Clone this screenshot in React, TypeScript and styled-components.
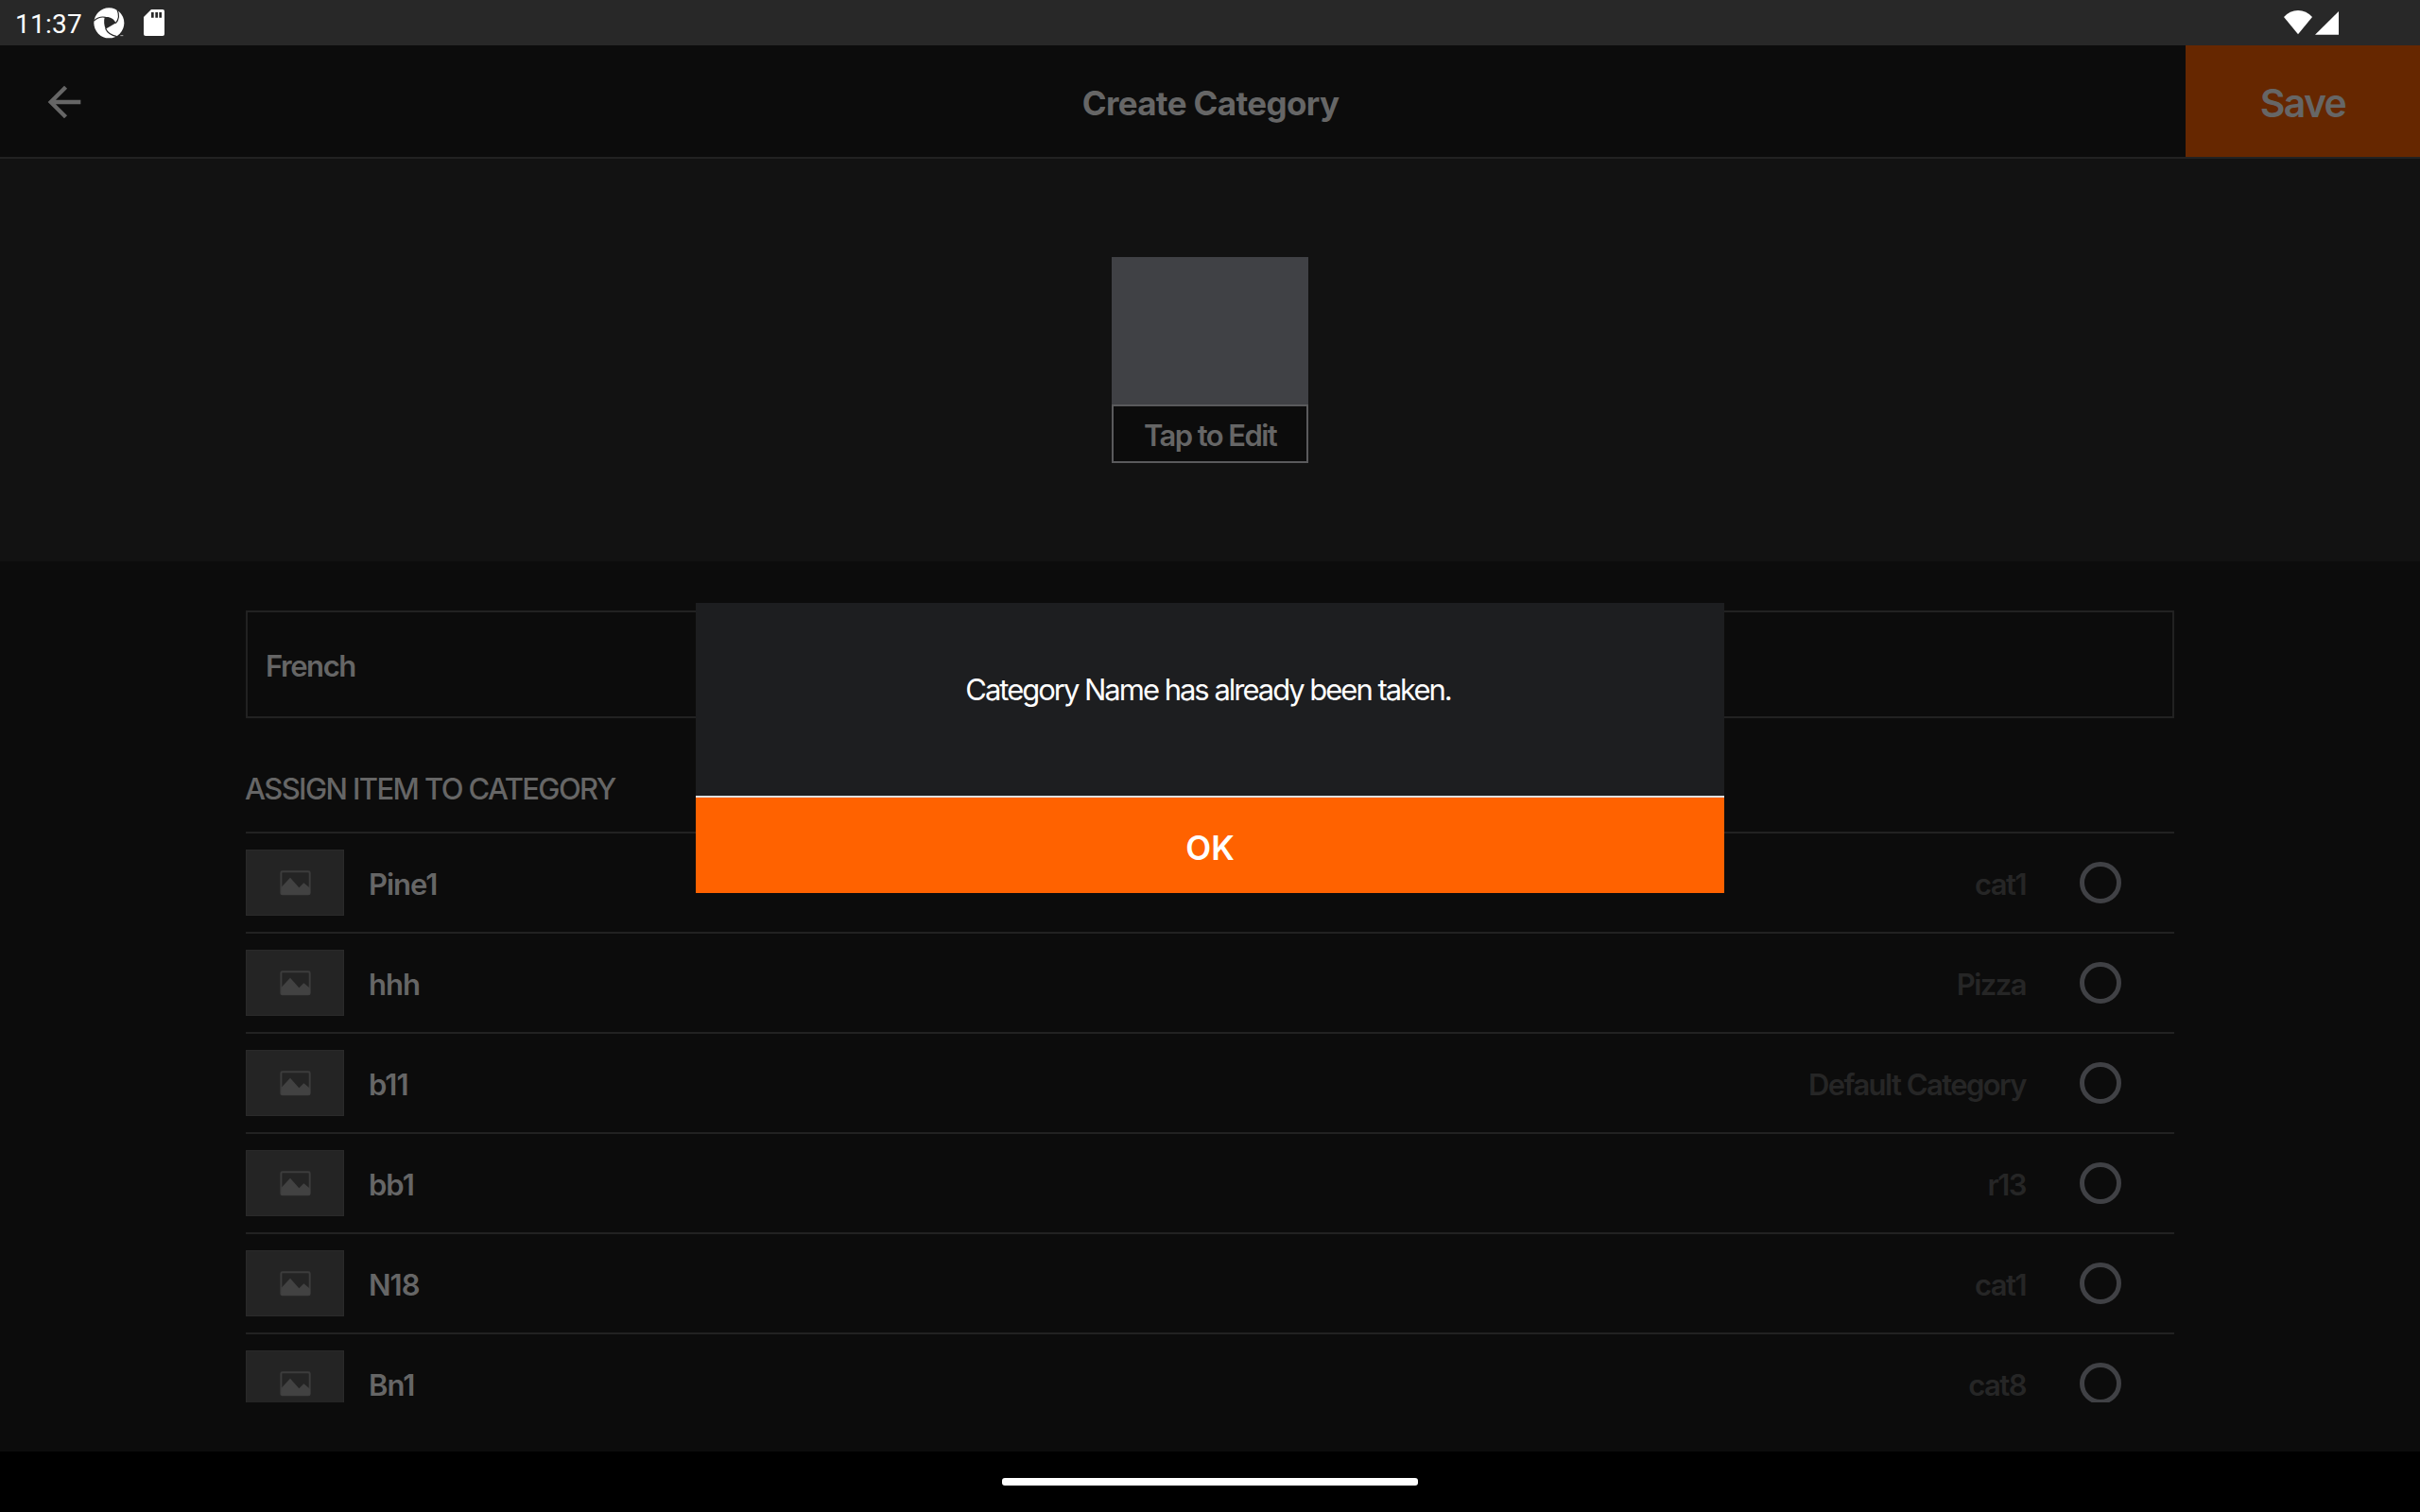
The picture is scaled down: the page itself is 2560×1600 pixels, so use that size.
import React from "react";
import styled, { createGlobalStyle } from "styled-components";

const GlobalStyle = createGlobalStyle`
  * { box-sizing: border-box; }
  body { margin: 0; background: #000; }
`;

const Screen = styled.div`
  position: relative;
  display: flex;
  flex-direction: column;
  width: 2560px;
  height: 1600px;
  overflow: hidden;
  background: #0c0c0c;
  font-family: Inter, "Liberation Sans", sans-serif;
  color: #666;
`;

const StatusBar = styled.div`
  display: flex;
  justify-content: space-between;
  height: 48px;
  flex: none;
  padding: 0 86px 0 16px;
  background: #282828;
  color: #fff;
`;

const StatusGroup = styled.div`
  display: flex;
  align-items: flex-start;
`;

const Clock = styled.span`
  width: 82px;
  padding-top: 2px;
  font: 400 28px/48px Roboto, sans-serif;
  letter-spacing: 0.25px;
  white-space: nowrap;
`;

const Glyph = styled.svg<{ $top: number; $left?: number }>`
  display: block;
  flex: none;
  margin-top: ${(p) => p.$top}px;
  margin-left: ${(p) => p.$left ?? 0}px;
`;

const Header = styled.header`
  display: grid;
  grid-template-columns: 248px 1fr 248px;
  grid-template-rows: 118px;
  height: 120px;
  flex: none;
  border-bottom: 2px solid #222;
`;

const BackButton = styled.div`
  display: flex;
  align-items: center;
  padding: 2px 0 0 42px;
`;

const Title = styled.h1`
  margin: 0;
  padding: 4px 0 0 1px;
  text-align: center;
  font-size: 35px;
  font-weight: 700;
  line-height: 114px;
  letter-spacing: -0.65px;
`;

const SaveButton = styled.div`
  padding: 4px 0 0 0;
  background: #662700;
  text-align: center;
  font-size: 41px;
  font-weight: 600;
  line-height: 114px;
  letter-spacing: -1.7px;
`;

const Hero = styled.section`
  display: flex;
  align-items: center;
  justify-content: center;
  height: 426px;
  flex: none;
  background: #121212;
`;

const ImagePicker = styled.div`
  display: flex;
  flex-direction: column;
  justify-content: flex-end;
  width: 208px;
  height: 218px;
  background: #404145;
`;

const PickerLabel = styled.div`
  height: 62px;
  padding-top: 2px;
  border: 2px solid #5a5a5c;
  background: #0c0c0c;
  text-align: center;
  font-size: 31px;
  font-weight: 600;
  line-height: 58px;
  letter-spacing: -1.6px;
  white-space: nowrap;
`;

const Form = styled.main`
  display: flex;
  flex-direction: column;
  flex: 1;
  min-height: 0;
  padding: 52px 260px;
`;

const NameField = styled.div`
  height: 114px;
  flex: none;
  padding: 3px 0 0 19px;
  border: 2px solid #222;
  font-size: 31px;
  font-weight: 600;
  line-height: 107px;
  letter-spacing: -1.45px;
`;

const SectionTitle = styled.h2`
  margin: 0 0 0 -1px;
  height: 120px;
  flex: none;
  padding-top: 30px;
  font-size: 31px;
  font-weight: 500;
  line-height: 90px;
  letter-spacing: -1.6px;
`;

const ItemList = styled.div`
  flex: 1;
  min-height: 0;
  overflow: hidden;
`;

const ItemRow = styled.div`
  display: flex;
  align-items: center;
  height: 106px;
  padding-right: 56px;
  border-top: 2px solid #222;
`;

const Thumb = styled.div`
  display: flex;
  justify-content: center;
  width: 104px;
  height: 70px;
  border: 1px solid #2a2a2a;
  background: #242424;
`;

const ItemName = styled.span`
  flex: 1;
  padding: 4px 0 0 26px;
  font-size: 31px;
  font-weight: 600;
  line-height: 60px;
  letter-spacing: -1px;
`;

const ItemCategory = styled.span`
  margin-right: 57px;
  padding-top: 4px;
  color: #262626;
  font-size: 31px;
  font-weight: 600;
  line-height: 60px;
  letter-spacing: -1.57px;
`;

const Radio = styled.span`
  width: 44px;
  height: 44px;
  border: 5px solid #404145;
  border-radius: 50%;
`;

const NavBar = styled.div`
  display: flex;
  justify-content: center;
  height: 64px;
  flex: none;
  padding-top: 28px;
  background: #000;
`;

const HomePill = styled.div`
  width: 440px;
  height: 8px;
  border-radius: 3px;
  background: #fff;
`;

const Dialog = styled.div`
  position: absolute;
  top: 638px;
  left: 736px;
  display: flex;
  flex-direction: column;
  width: 1088px;
  height: 307px;
  color: #fff;
`;

const Message = styled.p`
  margin: 0;
  height: 204px;
  flex: none;
  padding: 62px 4px 0 0;
  background: #1d1e20;
  text-align: center;
  font-size: 31px;
  font-weight: 400;
  line-height: 60px;
  letter-spacing: -2.02px;
`;

const OkButton = styled.div`
  height: 103px;
  padding-top: 5px;
  border-top: 2px solid #e0e0e0;
  background: #ff6200;
  text-align: center;
  font-size: 35px;
  font-weight: 600;
  line-height: 96px;
`;

const ShutterIcon = () => (
  <Glyph $top={7.67} $left={0.67} width="33" height="33" viewBox="296 23 99 99" fill="none">
    <circle cx="345" cy="72" r="48" fill="#fff" />
    <path d="M331 54 C347 51 360 59 367 72 L334 91 C329 79 328 66 331 54Z" fill="#282828" />
    <path d="M297 65 C308 55 320 51 334 54" stroke="#282828" strokeWidth="3.5" />
    <path d="M371 30 C379 48 376 62 366 73" stroke="#282828" strokeWidth="3.5" />
    <path d="M334 90 C340 104 350 111 370 115" stroke="#282828" strokeWidth="3.5" />
    <path d="M381 112 h9" stroke="#aaa" strokeWidth="3" />
  </Glyph>
);

const SdCardIcon = () => (
  <Glyph $top={10} $left={20.33} width="22" height="28" viewBox="0 0 66 84">
    <path d="M24 0H60Q66 0 66 6V78Q66 84 60 84H6Q0 84 0 78V24Z" fill="#fff" />
    <path d="M24 9h8v17h-8zM37 9h8v17h-8zM49 9h8v17h-8z" fill="#282828" />
  </Glyph>
);

const WifiIcon = () => (
  <Glyph $top={11} width="30" height="26" viewBox="0 0 90 78">
    <path d="M0 21Q19 0 45 0T90 21L45 76Z" fill="#fff" />
  </Glyph>
);

const SignalIcon = () => (
  <Glyph $top={12} $left={3} width="25" height="25" viewBox="0 0 75 75">
    <path d="M0 74L75 0V74Z" fill="#fff" />
  </Glyph>
);

const ArrowIcon = () => (
  <svg width="52" height="52" viewBox="0 0 24 24" fill="#666">
    <path d="M20 11H7.83l5.59-5.59L12 4l-8 8 8 8 1.41-1.41L7.83 13H20v-2z" />
  </svg>
);

const PictureIcon = () => (
  <Glyph $top={21} width="33" height="27" viewBox="0 0 99 81">
    <rect x="4" y="4" width="91" height="72" rx="4" fill="none" stroke="#3c3c3c" strokeWidth="6" />
    <path d="M5 53L33 23L61 55L76 40L96 56V74Q96 77 92 77H8Q4 77 4 74Z" fill="#424242" />
  </Glyph>
);

const items = [
  { name: "Pine1", category: "cat1" },
  { name: "hhh", category: "Pizza" },
  { name: "b11", category: "Default Category" },
  { name: "bb1", category: "r13" },
  { name: "N18", category: "cat1" },
  { name: "Bn1", category: "cat8" },
];

export default function App() {
  return (
    <Screen>
      <GlobalStyle />
      <StatusBar>
        <StatusGroup>
          <Clock>11:37</Clock>
          <ShutterIcon />
          <SdCardIcon />
        </StatusGroup>
        <StatusGroup>
          <WifiIcon />
          <SignalIcon />
        </StatusGroup>
      </StatusBar>
      <Header>
        <BackButton>
          <ArrowIcon />
        </BackButton>
        <Title>Create Category</Title>
        <SaveButton>Save</SaveButton>
      </Header>
      <Hero>
        <ImagePicker>
          <PickerLabel>Tap to Edit</PickerLabel>
        </ImagePicker>
      </Hero>
      <Form>
        <NameField>French</NameField>
        <SectionTitle>ASSIGN ITEM TO CATEGORY</SectionTitle>
        <ItemList>
          {items.map((item) => (
            <ItemRow key={item.name}>
              <Thumb>
                <PictureIcon />
              </Thumb>
              <ItemName>{item.name}</ItemName>
              <ItemCategory>{item.category}</ItemCategory>
              <Radio />
            </ItemRow>
          ))}
        </ItemList>
      </Form>
      <NavBar>
        <HomePill />
      </NavBar>
      <Dialog>
        <Message>Category Name has already been taken.</Message>
        <OkButton>OK</OkButton>
      </Dialog>
    </Screen>
  );
}
